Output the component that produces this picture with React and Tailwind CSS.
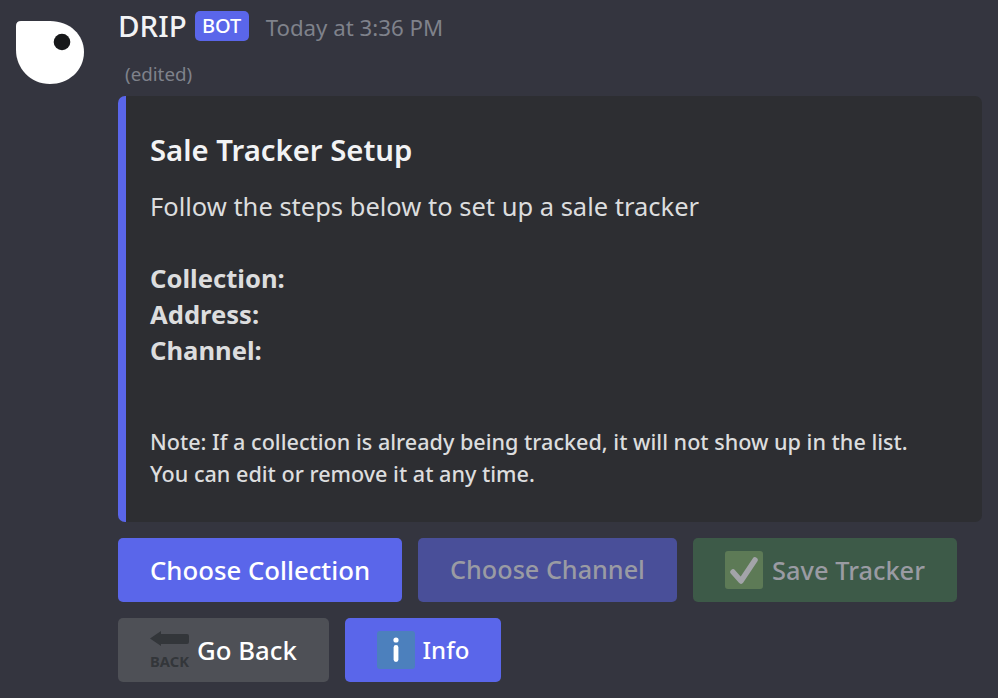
const font = { fontFamily: '"Noto Sans", "Open Sans", sans-serif' };

function Avatar() {
  return (
    <svg width="70" height="66" viewBox="0 0 70 66" className="shrink-0">
      <path d="M1 6 Q1 1 6 1 L35 1 C55 1 69 15 69 32 C69 51 53 64 35 64 C15 64 1 48 1 30 Z" fill="#ffffff" />
      <circle cx="47" cy="22" r="8.3" fill="#17181a" />
    </svg>
  );
}

function CheckIcon() {
  return (
    <span className="w-[38px] h-[38px] rounded-[3px] bg-[#5d7a56] flex items-center justify-center shrink-0">
      <svg width="38" height="38" viewBox="0 0 38 38">
        <path d="M8 21 L16 30 L30 9" fill="none" stroke="#a3a4a9" strokeWidth="5.5" strokeLinecap="round" strokeLinejoin="round" />
      </svg>
    </span>
  );
}

function BackIcon() {
  return (
    <svg width="42" height="42" viewBox="0 0 42 42" className="shrink-0 -mb-[4px] -mr-[2px]">
      <path d="M0 7.5 L11 0 L11 3 L37 3 Q39 3 39 5 L39 11 Q39 13 37 13 L11 13 L11 15 Z" fill="#33363a" />
      <text x="0" y="36" fontSize="14" fontWeight="700" fill="#33363a" fontFamily="Noto Sans" textLength="39" lengthAdjust="spacingAndGlyphs">BACK</text>
    </svg>
  );
}

function InfoIcon() {
  return (
    <span className="w-[38px] h-[38px] rounded-[3px] bg-[#4c80bd] flex items-center justify-center shrink-0">
      <svg width="38" height="38" viewBox="0 0 38 38">
        <circle cx="19" cy="9" r="2.6" fill="#ffffff" />
        <rect x="16.6" y="14" width="4.8" height="17" rx="2.4" fill="#ffffff" />
      </svg>
    </span>
  );
}

function Btn({ className, children }) {
  return (
    <div className={`h-16 rounded-[5px] flex items-center justify-center font-medium ${className}`}>
      {children}
    </div>
  );
}

export default function App() {
  return (
    <div style={font} className="w-[998px] h-[698px] overflow-hidden bg-[#34353f] flex items-start pl-[15px] pt-[20px]">
      <Avatar />
      <div className="ml-[33px] -mt-[20px] w-[864px]">
        <div className="h-[53px] flex items-center">
          <span className="text-[29.5px] font-medium text-[#f2f3f5] -mt-[1px]">DRIP</span>
          <span className="ml-[8px] h-[30px] w-[54px] rounded-[5px] bg-[#5a66ea] text-white text-[20px] font-medium flex items-center justify-center -mt-[1px]">BOT</span>
          <span className="ml-[17px] text-[22.25px] text-[#7f828b] mt-[3px]">Today at 3:36 PM</span>
        </div>
        <div className="h-[43px] pl-[7px] pt-[7px] text-[18.8px] leading-[28px] text-[#7f828b]">(edited)</div>
        <div className="h-[426px] rounded-[7px] bg-[#2d2e32] border-l-8 border-[#5a66ea] pl-[24px] pt-[32px]">
          <div className="text-[29.3px] leading-[44px] font-semibold text-[#f2f3f5]">Sale Tracker Setup</div>
          <div className="mt-[16px] text-[25.5px] leading-[36px] text-[#dcddde]">Follow the steps below to set up a sale tracker</div>
          <div className="mt-[37px] text-[25.6px] leading-[36px] font-bold text-[#dcddde]">
            <div>Collection:</div>
            <div>Address:</div>
            <div>Channel:</div>
          </div>
          <div className="mt-[57px] text-[21.6px] leading-[32px] font-medium text-[#dcddde]">
            <div>Note: If a collection is already being tracked, it will not show up in the list.</div>
            <div>You can edit or remove it at any time.</div>
          </div>
        </div>
        <div className="mt-4 flex gap-4">
          <Btn className="w-[284px] bg-[#5a66ea] text-white text-[25.75px]">Choose Collection</Btn>
          <Btn className="w-[259px] bg-[#494f99] text-[#9a9ba3] text-[25.2px]">Choose Channel</Btn>
          <Btn className="w-[264px] bg-[#3d5a48] text-[#9a9ba3] text-[25.4px] gap-[9px]"><CheckIcon />Save Tracker</Btn>
        </div>
        <div className="mt-4 flex gap-4">
          <Btn className="w-[211px] bg-[#4e5056] text-white text-[25.75px] gap-[7px]"><BackIcon />Go Back</Btn>
          <Btn className="w-[156px] bg-[#5a66ea] text-white text-[24px] gap-[8px]"><InfoIcon />Info</Btn>
        </div>
      </div>
    </div>
  );
}
